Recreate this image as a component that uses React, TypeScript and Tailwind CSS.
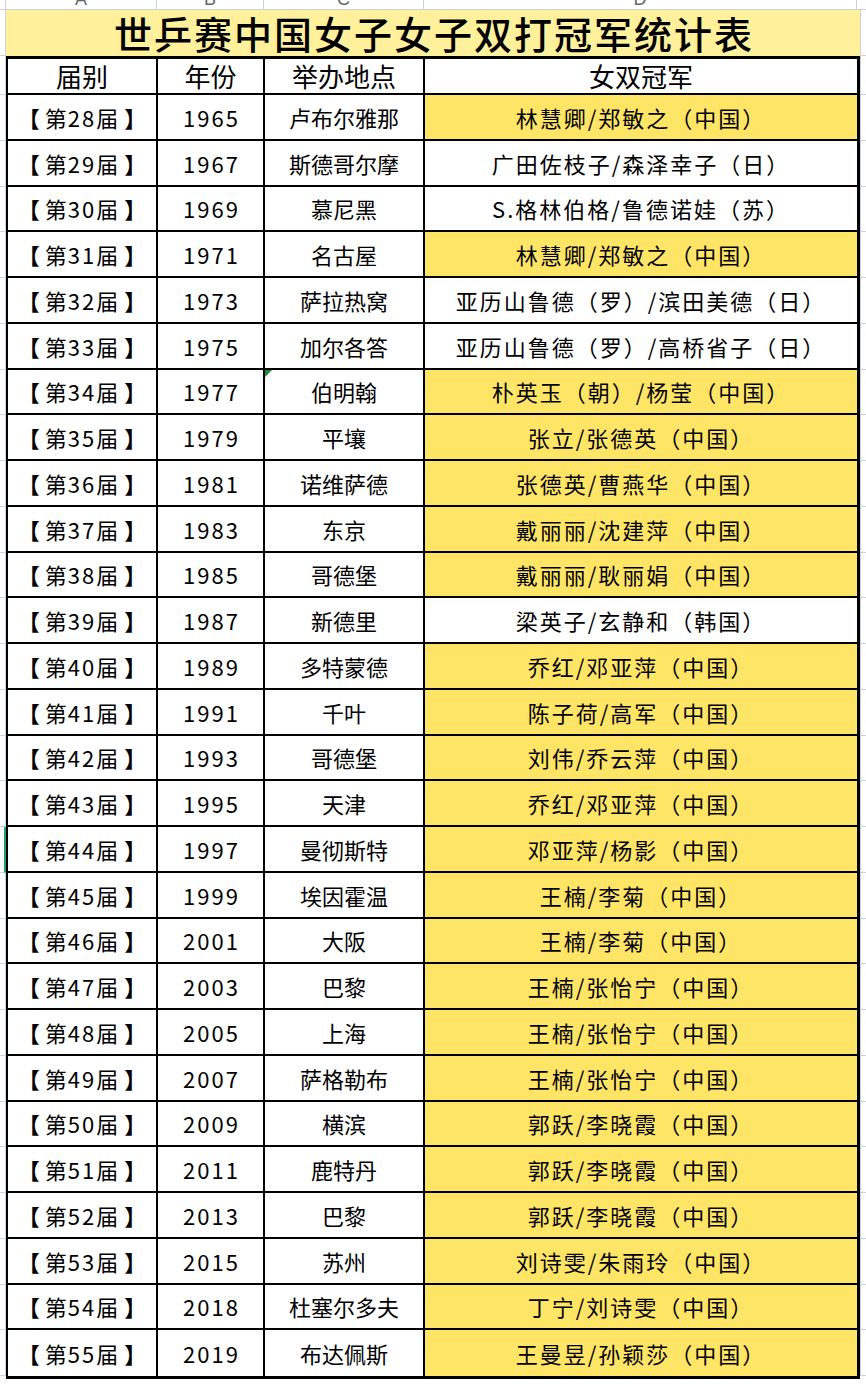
import React from "react";

type Row = { no: number; year: number; city: string; champ: string; cn: boolean };

const rows: Row[] = [
  { no: 28, year: 1965, city: "卢布尔雅那", champ: "林慧卿/郑敏之（中国）", cn: true },
  { no: 29, year: 1967, city: "斯德哥尔摩", champ: "广田佐枝子/森泽幸子（日）", cn: false },
  { no: 30, year: 1969, city: "慕尼黑", champ: "S.格林伯格/鲁德诺娃（苏）", cn: false },
  { no: 31, year: 1971, city: "名古屋", champ: "林慧卿/郑敏之（中国）", cn: true },
  { no: 32, year: 1973, city: "萨拉热窝", champ: "亚历山鲁德（罗）/滨田美德（日）", cn: false },
  { no: 33, year: 1975, city: "加尔各答", champ: "亚历山鲁德（罗）/高桥省子（日）", cn: false },
  { no: 34, year: 1977, city: "伯明翰", champ: "朴英玉（朝）/杨莹（中国）", cn: true },
  { no: 35, year: 1979, city: "平壤", champ: "张立/张德英（中国）", cn: true },
  { no: 36, year: 1981, city: "诺维萨德", champ: "张德英/曹燕华（中国）", cn: true },
  { no: 37, year: 1983, city: "东京", champ: "戴丽丽/沈建萍（中国）", cn: true },
  { no: 38, year: 1985, city: "哥德堡", champ: "戴丽丽/耿丽娟（中国）", cn: true },
  { no: 39, year: 1987, city: "新德里", champ: "梁英子/玄静和（韩国）", cn: false },
  { no: 40, year: 1989, city: "多特蒙德", champ: "乔红/邓亚萍（中国）", cn: true },
  { no: 41, year: 1991, city: "千叶", champ: "陈子荷/高军（中国）", cn: true },
  { no: 42, year: 1993, city: "哥德堡", champ: "刘伟/乔云萍（中国）", cn: true },
  { no: 43, year: 1995, city: "天津", champ: "乔红/邓亚萍（中国）", cn: true },
  { no: 44, year: 1997, city: "曼彻斯特", champ: "邓亚萍/杨影（中国）", cn: true },
  { no: 45, year: 1999, city: "埃因霍温", champ: "王楠/李菊（中国）", cn: true },
  { no: 46, year: 2001, city: "大阪", champ: "王楠/李菊（中国）", cn: true },
  { no: 47, year: 2003, city: "巴黎", champ: "王楠/张怡宁（中国）", cn: true },
  { no: 48, year: 2005, city: "上海", champ: "王楠/张怡宁（中国）", cn: true },
  { no: 49, year: 2007, city: "萨格勒布", champ: "王楠/张怡宁（中国）", cn: true },
  { no: 50, year: 2009, city: "横滨", champ: "郭跃/李晓霞（中国）", cn: true },
  { no: 51, year: 2011, city: "鹿特丹", champ: "郭跃/李晓霞（中国）", cn: true },
  { no: 52, year: 2013, city: "巴黎", champ: "郭跃/李晓霞（中国）", cn: true },
  { no: 53, year: 2015, city: "苏州", champ: "刘诗雯/朱雨玲（中国）", cn: true },
  { no: 54, year: 2018, city: "杜塞尔多夫", champ: "丁宁/刘诗雯（中国）", cn: true },
  { no: 55, year: 2019, city: "布达佩斯", champ: "王曼昱/孙颖莎（中国）", cn: true },
];

// row header strip on the left / right edges of the sheet
function Gutter({ side }: { side: "left" | "right" }) {
  const edge = side === "left" ? "border-r" : "border-l";
  return (
    <div className="w-[6px] flex flex-col">
      <div className={`h-[46px] border-b ${edge} border-[#c9d1de]`} />
      <div className={`h-[39px] border-b ${edge} border-[#c9d1de]`} />
      {rows.map((r) =>
        side === "left" && r.no === 44 ? (
          <div key={r.no} className="h-[45.75px] border-b border-b-[#c9d1de] border-r-2 border-r-[#21a366]" />
        ) : (
          <div key={r.no} className={`h-[45.75px] border-b ${edge} border-[#c9d1de]`} />
        )
      )}
    </div>
  );
}

export default function App() {
  return (
    <div className="w-[866px] h-[1384px] bg-white overflow-hidden text-black font-['Noto_Sans_CJK_SC',sans-serif]">
      {/* column letters, cut off at the top */}
      <div className="h-[10px] flex border-b border-[#c9d1de] overflow-hidden text-[#666] font-['Liberation_Sans',sans-serif] text-[18px] leading-[18px]">
        <div className="w-[6px] border-r border-[#c9d1de]" />
        <div className="w-[151px] border-r border-[#c9d1de] flex justify-center">
          <span className="-mt-[10px]">A</span>
        </div>
        <div className="w-[107px] border-r border-[#c9d1de] flex justify-center">
          <span className="-mt-[10px]">B</span>
        </div>
        <div className="w-[160px] border-r border-[#c9d1de] flex justify-center">
          <span className="-mt-[10px]">C</span>
        </div>
        <div className="w-[433px] border-r border-[#c9d1de] flex justify-center">
          <span className="-mt-[10px]">D</span>
        </div>
        <div className="flex-1" />
      </div>

      <div className="flex">
        <Gutter side="left" />

        <div className="w-[854px] flex flex-col">
          {/* title */}
          <div className="h-[46px] bg-[#fff09c] flex items-center justify-center">
            <span className="text-[38px] leading-none font-medium tracking-[2px] pl-[2px]">
              世乒赛中国女子女子双打冠军统计表
            </span>
          </div>

          {/* table */}
          <div className="border-t-[3px] border-r-[3px] border-b-[3px] border-l-2 border-black flex flex-col">
            <div className="h-[36px] flex border-b-2 border-black text-[26px] leading-none">
              <div className="w-[150px] border-r-2 border-black flex items-center justify-center">届别</div>
              <div className="w-[107px] border-r-2 border-black flex items-center justify-center">年份</div>
              <div className="w-[160px] border-r-2 border-black flex items-center justify-center">举办地点</div>
              <div className="flex-1 flex items-center justify-center">女双冠军</div>
            </div>

            {rows.map((r, i) => (
              <div
                key={r.no}
                className={`h-[45.75px] flex text-[22px] leading-none ${
                  i === rows.length - 1 ? "" : "border-b-2 border-black"
                }`}
              >
                <div className="w-[150px] border-r-2 border-black flex items-center justify-center gap-[5px]">
                  <span className="font-bold">【</span>
                  <span className="tracking-[1px]">
                    第<span className="tracking-[2px]">{r.no}</span>届
                  </span>
                  <span className="font-bold">】</span>
                </div>
                <div className="w-[107px] border-r-2 border-black flex items-center justify-center tracking-[2px] pl-[2px]">
                  {r.year}
                </div>
                <div className="relative w-[160px] border-r-2 border-black flex items-center justify-center">
                  {r.no === 34 && (
                    <svg className="absolute left-0 top-0" width="7" height="7" viewBox="0 0 7 7">
                      <polygon points="0,0 7,0 0,7" fill="#1e8a3c" />
                    </svg>
                  )}
                  {r.city}
                </div>
                <div
                  className={`flex-1 flex items-center justify-center tracking-[2px] ${
                    r.cn ? "bg-[#ffe566]" : ""
                  }`}
                >
                  {r.champ}
                </div>
              </div>
            ))}
          </div>
        </div>

        <Gutter side="right" />
      </div>
    </div>
  );
}
